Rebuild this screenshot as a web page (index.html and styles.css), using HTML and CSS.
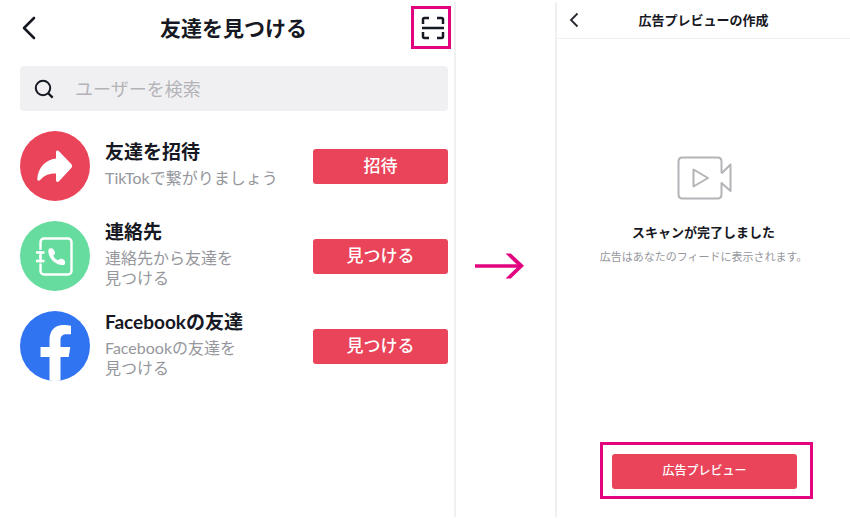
FILE: index.html
```html
<!DOCTYPE html>
<html lang="ja">
<head>
<meta charset="utf-8">
<meta name="viewport" content="width=device-width, initial-scale=1">
<title>友達を見つける</title>
<link rel="stylesheet" href="styles.css">
</head>
<body>
<main class="steps">
  <section class="panel find">
    <header class="find-header">
      <button class="icon-button back" type="button" aria-label="戻る">
        <svg width="20" height="24" viewBox="0 0 20 24"><path d="M18 2 8 12l10 10" fill="none" stroke="#161823" stroke-width="2.6" stroke-linecap="round" stroke-linejoin="round"/></svg>
      </button>
      <h1 class="find-title">友達を見つける</h1>
      <button class="icon-button scan highlight" type="button" aria-label="スキャン">
        <svg width="24" height="24" viewBox="0 0 24 24"><path d="M2 8V3.500Q2 2 3.500 2H8M16 2h4.500Q22 2 22 3.500V8M2 16v4.500Q2 22 3.500 22H8M16 22h4.500q1.500 0 1.500-1.500V16M1 12h22" fill="none" stroke="#161823" stroke-width="2.500"/></svg>
      </button>
    </header>

    <label class="search">
      <svg width="20" height="20" viewBox="0 0 20 20"><g fill="none" stroke="#161823" stroke-width="2"><circle cx="9" cy="9" r="7.200"/><path d="m14 14 4.600 4.600" stroke-width="2.400"/></g></svg>
      <input class="search-input" type="search" placeholder="ユーザーを検索" aria-label="ユーザーを検索">
    </label>

    <ul class="options">
      <li class="option">
        <svg class="avatar" viewBox="0 0 70 70"><circle cx="35" cy="35" r="35" fill="#ea445a"/><path d="M36 21.500c0-2 1.600-2.500 3-1.200l12.500 13q1.500 1.700 0 3.400L39 50.300c-1.400 1.300-3 .8-3-1.200v-6.600c-6.500 0-11.500 1.500-15.600 6.300-1.300 1.500-3.300 1.200-3.100-1 .8-11 7.700-18.800 18.700-20.300z" fill="#fff"/></svg>
        <div class="option-text">
          <h2 class="option-title">友達を招待</h2>
          <p class="option-note">TikTokで繋がりましょう</p>
        </div>
        <button class="action" type="button">招待</button>
      </li>
      <li class="option">
        <svg class="avatar" viewBox="0 0 70 70"><circle cx="35" cy="35" r="35" fill="#67dc9f"/><rect x="20.500" y="17.500" width="31" height="36" rx="3.500" fill="none" stroke="#fff" stroke-width="2.400"/><path d="M16 31.500h9M16 40h9" stroke="#67dc9f" stroke-width="5"/><path d="M16 31.500h8.500M16 40h8.500" stroke="#fff" stroke-width="2.400"/><path d="M20.500 30v11.500" stroke="#fff" stroke-width="2.400"/><path d="M28.600 28.200c1.300-1.500 3.900-1.400 5 .2l1.300 2.500c.5 1.200.1 2.100-.7 2.900l-.9.900c1 2.300 2.300 3.600 4.700 4.500l.9-.8c1.200-.9 2.300-.9 3.500-.4l1.800.9c1.200.7 1.300 4.800-.2 5.100-8.500 1.200-17.400-8.500-15.400-15.800z" fill="#fff"/></svg>
        <div class="option-text">
          <h2 class="option-title">連絡先</h2>
          <p class="option-note">連絡先から友達を<br>見つける</p>
        </div>
        <button class="action" type="button">見つける</button>
      </li>
      <li class="option">
        <svg class="avatar" viewBox="0 0 70 70"><circle cx="35" cy="35" r="35" fill="#3174f2"/><path d="M29.500 69.600V46h-9V36h9v-7c0-9.500 5.200-15 14-15 2.700 0 5.500.4 7.500.7v8.600h-4.500c-4.500 0-6 2.700-6 5.700v7h9.800l-1.600 10h-8.200v23.600a35 35 0 0 1-11 0z" fill="#fff"/></svg>
        <div class="option-text">
          <h2 class="option-title">Facebookの友達</h2>
          <p class="option-note">Facebookの友達を<br>見つける</p>
        </div>
        <button class="action" type="button">見つける</button>
      </li>
    </ul>
  </section>

  <div class="next">
    <svg width="50" height="26" viewBox="0 0 50 26" role="img" aria-label="次へ"><path d="M0 13h45" stroke="#e2037f" stroke-width="3.600"/><path d="M30.500.5h5.300L49 12.800 35.800 25.500h-5.300L43.500 13z" fill="#e2037f"/></svg>
  </div>

  <section class="panel preview">
    <header class="preview-header">
      <button class="icon-button back" type="button" aria-label="戻る">
        <svg width="12" height="16" viewBox="0 0 12 16"><path d="M9.500 1.500 3 8l6.500 6.500" fill="none" stroke="#25262f" stroke-width="1.800"/></svg>
      </button>
      <h1 class="preview-title">広告プレビューの作成</h1>
    </header>
    <div class="status">
      <svg width="56" height="44" viewBox="0 0 56 44"><g fill="none" stroke="#b4b4b8" stroke-width="2" stroke-linejoin="round"><path d="M45.500 17V5.500q0-4-4-4h-35q-4 0-4 4v33q0 4 4 4h35q4 0 4-4V27l9 8V8.500L45.500 17.500"/><path d="M17.500 13.500v17L32 22z"/></g></svg>
      <h2 class="status-title">スキャンが完了しました</h2>
      <p class="status-note">広告はあなたのフィードに表示されます。</p>
    </div>
    <div class="preview-footer highlight">
      <button class="action action-small" type="button">広告プレビュー</button>
    </div>
  </section>
</main>
</body>
</html>
```
FILE: styles.css
```css
* {
  box-sizing: border-box;
}

body {
  margin: 0;
  background: #fff;
  color: #161823;
  font-family: Lato, "Noto Sans CJK JP", sans-serif;
}

h1,
h2,
p,
ul {
  margin: 0;
  padding: 0;
}

h1,
h2 {
  font-weight: 700;
}

button,
input {
  font-family: inherit;
  border: 0;
}

svg {
  display: block;
  flex: none;
}

.steps {
  display: grid;
  grid-template-columns: 456fr 99fr 295fr;
  min-height: 100vh;
  padding: 2px 0 5px;
}

.panel {
  display: flex;
  flex-direction: column;
}

.icon-button {
  display: flex;
  padding: 0;
  background: none;
  color: inherit;
}

.highlight {
  border: 3px solid #e2037f;
}

.find {
  border-right: 2px solid #f0f0f1;
}

.find-header {
  display: grid;
  grid-template-columns: 1fr auto 1fr;
  align-items: center;
  padding: 4px 3px 0 16px;
}

.find-title {
  font-size: 21px;
  line-height: 30px;
}

.scan {
  justify-self: end;
  padding: 7px 3px 6px 7px;
}

.search {
  display: flex;
  align-items: center;
  gap: 21px;
  height: 45px;
  margin: 17px 6px 0 20px;
  padding: 0 14px;
  border-radius: 4px;
  background: #f0f0f2;
}

.search-input {
  flex: 1;
  min-width: 0;
  padding: 0;
  outline: 0;
  background: none;
  color: inherit;
  font-size: 18px;
}

.search-input::placeholder {
  color: #b4b4b8;
}

.options {
  display: grid;
  gap: 20px;
  margin: 20px 6px 0 20px;
  list-style: none;
}

.option {
  display: flex;
  align-items: center;
}

.avatar {
  width: 70px;
  height: 70px;
}

.option-text {
  flex: 1;
  display: grid;
  gap: 5px;
  padding: 0 0 3px 15px;
}

.option-title {
  font-size: 19px;
  line-height: 22px;
}

.option-note {
  color: #96979d;
  font-size: 16px;
  line-height: 20px;
}

.action {
  flex: none;
  width: 135px;
  height: 35px;
  padding: 0 0 4px;
  border-radius: 3px;
  background: #ea445a;
  color: #fff;
  font-size: 17px;
  font-weight: 500;
}

.next {
  display: flex;
  align-items: center;
  justify-content: center;
  padding: 12px 11px 0 0;
}

.preview {
  border-left: 2px solid #f0f0f1;
}

.preview-header {
  display: grid;
  grid-template-columns: 1fr auto 1fr;
  align-items: center;
  height: 37px;
  padding: 0 11px;
  border-bottom: 1px solid #f0f0f1;
}

.preview-title {
  font-size: 13px;
  line-height: 20px;
}

.status {
  flex: 1;
  display: flex;
  flex-direction: column;
  align-items: center;
  padding-top: 117px;
}

.status-title {
  margin-top: 22px;
  font-size: 13px;
  line-height: 20px;
}

.status-note {
  margin-top: 6px;
  color: #96979d;
  font-size: 11px;
  line-height: 18px;
}

.preview-footer {
  display: flex;
  margin: 0 37px 18px 43px;
  padding: 9px 13px 7px 9px;
}

.action-small {
  flex: 1;
  font-size: 12px;
}
```
